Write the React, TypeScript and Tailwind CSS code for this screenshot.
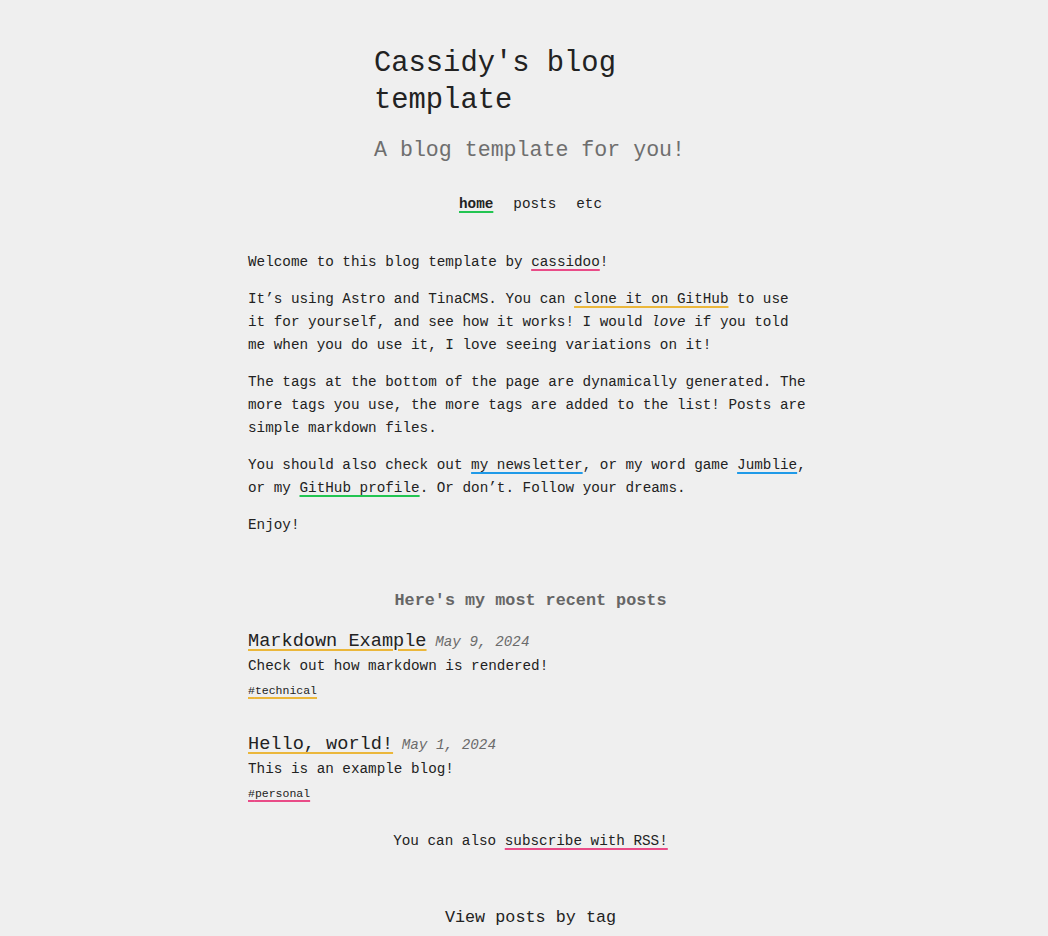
import React from "react";

const pink = "underline decoration-[#e94b87] decoration-2 underline-offset-[3px]";
const yellow = "underline decoration-[#ebb73b] decoration-2 underline-offset-[3px]";
const blue = "underline decoration-[#1f9ae8] decoration-2 underline-offset-[3px]";
const green = "underline decoration-[#23c552] decoration-2 underline-offset-[3px]";

interface PostProps {
  title: string;
  date: string;
  blurb: string;
  tag: string;
  tagClass: string;
}

const Post: React.FC<PostProps> = ({ title, date, blurb, tag, tagClass }) => (
  <li className="list-none">
    <div className="text-[18.6px] leading-[26px]">
      <a href="#" className={yellow}>
        {title}
      </a>
      <span className="text-[14.3px] italic text-[#6b6b6b]"> {date}</span>
    </div>
    <p className="leading-[23px]">{blurb}</p>
    <div className="mt-[5px] text-[11.5px] leading-[16px]">
      <a href="#" className={tagClass}>
        #{tag}
      </a>
    </div>
  </li>
);

export default function App() {
  return (
    <div
      className="min-h-screen bg-[#efefef] text-[#222222] text-[14.3px]"
      style={{ fontFamily: '"Liberation Mono", "DejaVu Sans Mono", monospace' }}
    >
      <div className="flex flex-col items-center pl-[13px] pt-[45px] pb-10">
        {/* Header */}
        <header className="w-[313px]">
          <h1 className="text-[28.8px] leading-[37px] font-normal">Cassidy's blog template</h1>
          <p className="mt-[16px] text-[21.6px] leading-[30px] text-[#6e6e6e]">A blog template for you!</p>
        </header>

        {/* Nav */}
        <nav className="mt-[28px] flex gap-[20px] leading-[23px]">
          <a href="#" className={"font-bold " + green}>
            home
          </a>
          <a href="#">posts</a>
          <a href="#">etc</a>
        </nav>

        <main className="mt-[35px] w-[565px]">
          <div className="flex flex-col gap-[14px] leading-[23px]">
            <p>
              Welcome to this blog template by{" "}
              <a href="#" className={pink}>
                cassidoo
              </a>
              !
            </p>
            <p>
              It’s using Astro and TinaCMS. You can{" "}
              <a href="#" className={yellow}>
                clone it on GitHub
              </a>{" "}
              to use it for yourself, and see how it works! I would <em>love</em> if you told me when you do use
              it, I love seeing variations on it!
            </p>
            <p>
              The tags at the bottom of the page are dynamically generated. The more tags you use, the more tags
              are added to the list! Posts are simple markdown files.
            </p>
            <p>
              You should also check out{" "}
              <a href="#" className={blue}>
                my newsletter
              </a>
              , or my word game{" "}
              <a href="#" className={blue}>
                Jumblie
              </a>
              , or my{" "}
              <a href="#" className={green}>
                GitHub profile
              </a>
              . Or don’t. Follow your dreams.
            </p>
            <p>Enjoy!</p>
          </div>

          {/* Recent posts */}
          <section className="mt-[52px]">
            <h3 className="text-center text-[16.8px] leading-[24px] font-bold text-[#666666]">
              Here's my most recent posts
            </h3>
            <ul className="mt-[16px] flex flex-col gap-[33px]">
              <Post
                title="Markdown Example"
                date="May 9, 2024"
                blurb="Check out how markdown is rendered!"
                tag="technical"
                tagClass={yellow}
              />
              <Post
                title="Hello, world!"
                date="May 1, 2024"
                blurb="This is an example blog!"
                tag="personal"
                tagClass={pink}
              />
            </ul>
            <p className="mt-[28px] text-center leading-[23px]">
              You can also{" "}
              <a href="#" className={pink}>
                subscribe with RSS!
              </a>
            </p>
          </section>

          <section className="mt-[53px]">
            <h3 className="text-center text-[16.8px] leading-[24px]">View posts by tag</h3>
          </section>
        </main>
      </div>
    </div>
  );
}
